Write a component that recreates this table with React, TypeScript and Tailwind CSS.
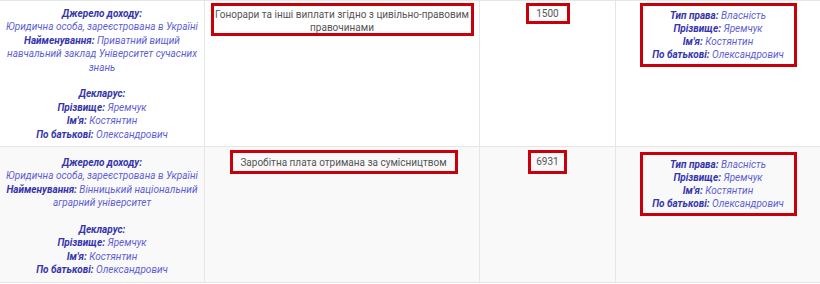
import React from "react";

const L = "font-bold italic text-[#3535ad]";
const V = "italic text-[#5e5ed4]";

function Line({ label, value }: { label: string; value: string }) {
  return (
    <div>
      <span className={L}>{label}</span> <span className={V}>{value}</span>
    </div>
  );
}

function Source({ name }: { name: string }) {
  return (
    <div className="text-center text-[10px] leading-[13.4px]">
      <div className={L}>Джерело доходу:</div>
      <div className={V}>Юридична особа, зареєстрована в Україні</div>
      <div>
        <span className={L}>Найменування:</span> <span className={V}>{name}</span>
      </div>
      <div className="h-[13.4px]" />
      <div className={L}>Декларус:</div>
      <Line label="Прізвище:" value="Яремчук" />
      <Line label="Ім'я:" value="Костянтин" />
      <Line label="По батькові:" value="Олександрович" />
    </div>
  );
}

function Owner() {
  return (
    <div className="border-[3px] border-[#c8000a] w-[157px] py-[3px] text-center text-[10px] leading-[13px]">
      <Line label="Тип права:" value="Власність" />
      <Line label="Прізвище:" value="Яремчук" />
      <Line label="Ім'я:" value="Костянтин" />
      <Line label="По батькові:" value="Олександрович" />
    </div>
  );
}

export default function App() {
  return (
    <div
      className="w-[820px] h-[284px] bg-white overflow-hidden"
      style={{ fontFamily: "Roboto, 'Noto Sans', sans-serif" }}
    >
      <div className="grid grid-cols-[205px_275px_136px_204px] border-t border-[#e6e6e6]">
        {/* Row 1 */}
        <div className="h-[146px] border-r border-b border-[#e6e6e6] px-[4px] pt-[6px]">
          <Source name="Приватний вищий навчальний заклад Університет сучасних знань" />
        </div>
        <div className="h-[146px] border-r border-b border-[#e6e6e6] flex items-start justify-center pt-[2px]">
          <div className="border-[3px] border-[#c8000a] w-[263px] h-[33px] text-center text-[10px] leading-[13px] text-[#555] pt-[2px]">
            Гонорари та інші виплати згідно з цивільно-правовим
            <br />
            правочинами
          </div>
        </div>
        <div className="h-[146px] border-r border-b border-[#e6e6e6] flex items-start justify-center pt-[2px]">
          <div className="border-[3px] border-[#c8000a] w-[44px] h-[21px] flex items-center justify-center text-[10px] text-[#555] leading-none">
            1500
          </div>
        </div>
        <div className="h-[146px] border-b border-[#e6e6e6] flex items-start justify-center pt-[2px]">
          <Owner />
        </div>

        {/* Row 2 */}
        <div className="h-[136px] bg-[#f9f9f9] border-r border-b border-[#e6e6e6] px-[4px] pt-[9px]">
          <Source name="Вінницький національний аграрний університет" />
        </div>
        <div className="h-[136px] bg-[#f9f9f9] border-r border-b border-[#e6e6e6] flex items-start justify-center pt-[3px]">
          <div className="border-[3px] border-[#c8000a] w-[228px] h-[24px] flex items-center justify-center text-[10px] leading-[13px] text-[#555] ml-[3px]">
            Заробітна плата отримана за сумісництвом
          </div>
        </div>
        <div className="h-[136px] bg-[#f9f9f9] border-r border-b border-[#e6e6e6] flex items-start justify-center pt-[3px]">
          <div className="border-[3px] border-[#c8000a] w-[39px] h-[24px] flex items-center justify-center text-[10px] text-[#555] leading-none">
            6931
          </div>
        </div>
        <div className="h-[136px] bg-[#f9f9f9] border-b border-[#e6e6e6] flex items-start justify-center pt-[5px]">
          <Owner />
        </div>
      </div>
    </div>
  );
}
